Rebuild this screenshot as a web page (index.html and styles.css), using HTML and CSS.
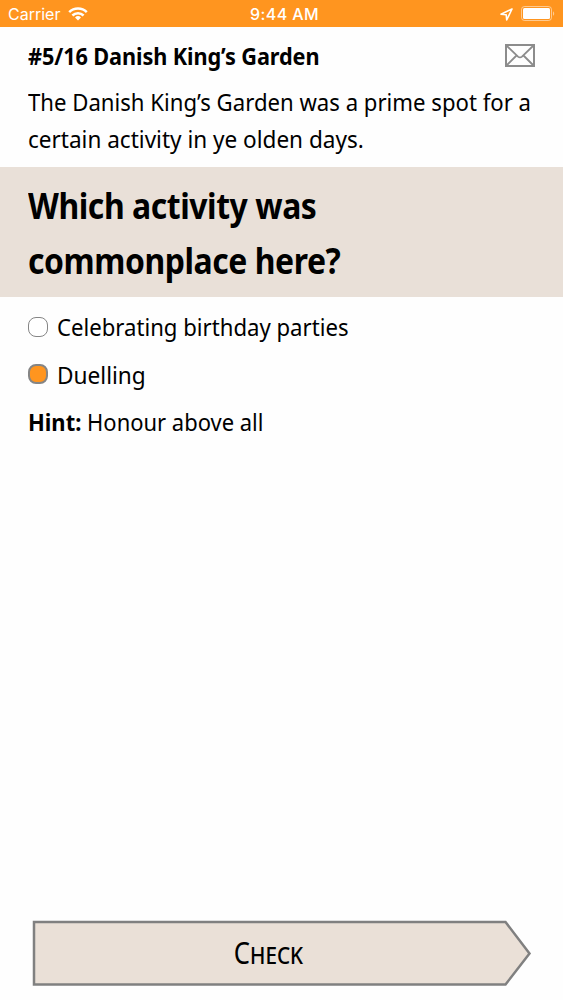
FILE: index.html
```html
<!DOCTYPE html>
<html lang="en">
<head>
    <meta charset="UTF-8">
    <meta name="viewport" content="width=device-width, initial-scale=1.0">
    <title>Danish King’s Garden</title>
    <link rel="stylesheet" href="styles.css">
</head>
<body>
    <div class="status-bar">
        <div class="status-left">
            <span class="carrier">Carrier</span>
            <svg class="wifi" width="20" height="14" viewBox="0 0 20 14" fill="none" stroke="#fff" stroke-width="2.5">
                <path d="M1.2 5.2a12.5 12.5 0 0 1 17.6 0"/>
                <path d="M4.4 8.5a8 8 0 0 1 11.2 0"/>
                <path d="M10 13.5l-3-3a4.3 4.3 0 0 1 6 0z" fill="#fff" stroke="none"/>
            </svg>
        </div>
        <span class="clock">9:44 AM</span>
        <div class="status-right">
            <svg width="13" height="13" viewBox="0 0 13 13" fill="none" stroke="#fff" stroke-width="1.6" stroke-linejoin="round">
                <path d="M12 1L1 6.2l5.2.5.5 5.3z"/>
            </svg>
            <svg width="34" height="16" viewBox="0 0 34 16">
                <rect x="0.5" y="0.5" width="30" height="14" rx="3" fill="none" stroke="#fff" stroke-opacity="0.5"/>
                <rect x="2" y="2" width="27" height="11" rx="1.5" fill="#fff"/>
                <path d="M32 5.2c1.6.8 1.6 3.8 0 4.6z" fill="#fff" fill-opacity="0.5"/>
            </svg>
        </div>
    </div>

    <header class="header">
        <h1 class="title">#5/16 Danish King’s Garden</h1>
        <svg width="30" height="23" viewBox="0 0 30 23" fill="none" stroke="#8c8c8c" stroke-width="2">
            <rect x="1" y="1" width="28" height="21"/>
            <path d="M1.5 1.5L13 12.6q2 1.6 4 0L28.5 1.5M1.5 21.5l10-10M28.5 21.5l-10-10" stroke-width="1.8"/>
        </svg>
    </header>

    <p class="intro">
        <span class="intro-first">The Danish King’s Garden was a prime spot for a</span><br>
        <span class="intro-second">certain activity in ye olden days.</span>
    </p>

    <h2 class="question">
        <span class="question-first">Which activity was</span><br>
        <span class="question-second">commonplace here?</span>
    </h2>

    <div class="answers">
        <div class="option">
            <span class="radio"></span>
            <span class="birthday">Celebrating birthday parties</span>
        </div>
        <div class="option">
            <span class="radio selected"></span>
            <span class="duel">Duelling</span>
        </div>
        <p class="hint"><strong>Hint:</strong> <span>Honour above all</span></p>
    </div>

    <div class="footer">
        <button class="check-btn">
            <svg class="check-shape" width="500" height="67" viewBox="0 0 500 67">
                <path d="M2 2H473.5L497.5 33.5L473.5 64.5H2Z" fill="#eae0d7" stroke="#808080" stroke-width="2.5"/>
            </svg>
            <span class="check-label">Check</span>
        </button>
    </div>
</body>
</html>
```
FILE: styles.css
```css
* {
    box-sizing: border-box;
}

body {
    margin: 0;
    height: 1000px;
    display: flex;
    flex-direction: column;
    background: #fefefe;
    color: #000;
    font-family: "Noto Sans", sans-serif;
    font-size: 23px;
    overflow: hidden;
}

h1, h2, p {
    margin: 0;
}

span {
    white-space: nowrap;
}

.status-bar {
    height: 27px;
    padding: 1px 8px 0;
    display: grid;
    grid-template-columns: 1fr auto 1fr;
    align-items: center;
    background: #ff951f;
    color: #fff;
    font-family: Inter, sans-serif;
    font-size: 16px;
}

.status-left,
.status-right {
    display: flex;
    align-items: center;
}

.status-left {
    gap: 8px;
}

.status-right {
    justify-content: flex-end;
    gap: 8px;
}

.clock {
    padding-left: 6px;
    font-weight: 500;
    letter-spacing: 0.4px;
}

.header {
    height: 57px;
    padding: 0 28px;
    display: flex;
    align-items: center;
    justify-content: space-between;
}

.title {
    font-size: 23px;
    font-weight: 700;
    letter-spacing: -0.1px;
    transform: scaleX(0.943);
    transform-origin: left;
}

.intro {
    height: 83px;
    padding-left: 28px;
    line-height: 36.5px;
}

.intro-first,
.intro-second {
    display: inline-block;
    transform: scaleX(0.963);
    transform-origin: left;
}

.intro-second {
    transform: scaleX(0.98);
}

.question {
    height: 130px;
    padding: 12px 28px 0;
    background: #e9e0d8;
    font-size: 36px;
    font-weight: 700;
    line-height: 54.5px;
}

.question-first,
.question-second {
    display: inline-block;
    letter-spacing: -0.5px;
    transform: scaleX(0.887);
    transform-origin: left;
}

.answers {
    padding: 7px 28px 0;
    line-height: 47.5px;
}

.option {
    height: 47.5px;
    display: flex;
    align-items: center;
    gap: 9px;
}

.radio {
    width: 20px;
    height: 20px;
    margin-top: -2px;
    border: 1.5px solid #858585;
    border-radius: 8px;
    background: #fff;
}

.radio.selected {
    border-width: 2px;
    background: #ff951f;
}

.birthday,
.duel {
    transform: scaleX(0.963);
    transform-origin: left;
}

.duel {
    transform: scaleX(0.985);
}

.hint {
    transform: scaleX(0.955);
    transform-origin: left;
}

.footer {
    margin-top: auto;
    padding: 0 31px 13px 32px;
}

.check-btn {
    display: grid;
    place-items: center;
    width: 500px;
    height: 67px;
    padding: 0;
    border: none;
    background: none;
    color: #000;
    font-family: "Noto Sans", sans-serif;
    font-size: 30px;
    cursor: pointer;
}

.check-shape,
.check-label {
    grid-area: 1 / 1;
}

.check-label {
    margin: 0 28px 2px 0;
    font-variant: small-caps;
    transform: scaleX(0.855);
}
```
